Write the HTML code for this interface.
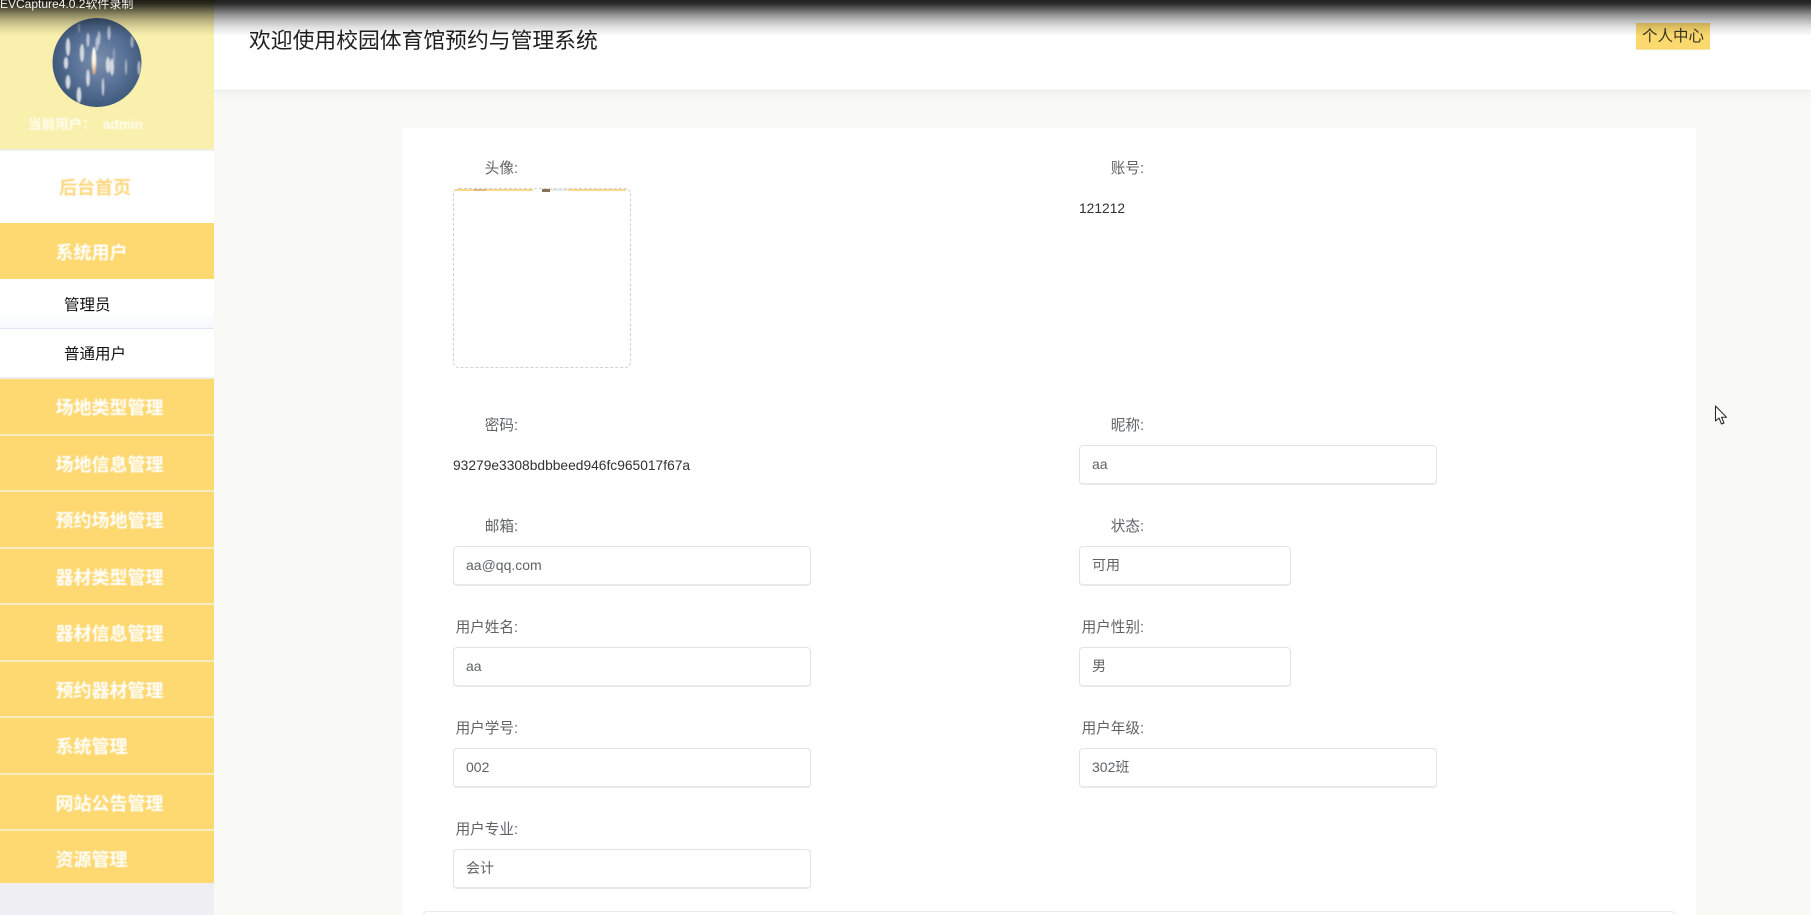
<!DOCTYPE html>
<html lang="zh-CN">
<head>
<meta charset="utf-8">
<title>校园体育馆预约与管理系统</title>
<style>
html,body{margin:0;padding:0;width:1811px;height:915px;overflow:hidden;background:#f9faf5;}
body{position:relative;font-family:"Liberation Sans","Noto Sans CJK SC",sans-serif;color:#606266;}
div,span{box-sizing:border-box;}
.a{position:absolute;}
.t{position:absolute;white-space:nowrap;line-height:20px;height:20px;filter:blur(.3px);}
.lab{font-size:14.6px;color:#606266;text-align:right;width:90px;}
.val{font-size:13.8px;color:#303133;}
.inp{position:absolute;height:40px;background:#fff;border:1px solid #e1e3e8;border-bottom:2px solid #e8e9ec;border-radius:4px;font-size:14px;color:#606266;line-height:37.5px;padding-left:12px;white-space:nowrap;}
.menu{position:absolute;left:0;width:213.5px;height:56.5px;background:#fed870;border-bottom:2px solid #f7ebbf;color:#fff;font-size:18px;font-weight:700;line-height:59px;padding-left:55.5px;white-space:nowrap;}
.menu span{filter:blur(.45px);display:inline-block;line-height:20px;}
</style>
</head>
<body>

<!-- Sidebar -->
<div class="a" style="left:0;top:0;width:213.5px;height:915px;background:#eeeef3;"></div>
<div class="a" style="left:0;top:0;width:213.5px;height:149px;background:#faf0ae;"></div>
<div class="a" style="left:0;top:149px;width:213.5px;height:2px;background:#f0f0ee;"></div>

<svg class="a" style="left:0;top:0;" width="214" height="150" viewBox="0 0 214 150">
  <defs>
    <radialGradient id="av" cx="52%" cy="48%" r="55%">
      <stop offset="0" stop-color="#7a8fae"/>
      <stop offset=".55" stop-color="#587196"/>
      <stop offset="1" stop-color="#3c5678"/>
    </radialGradient>
    <clipPath id="avc"><circle cx="97" cy="62.5" r="44.5"/></clipPath>
    <linearGradient id="fl" x1="0" y1="0" x2="0" y2="1">
      <stop offset="0" stop-color="#ffffff"/>
      <stop offset=".55" stop-color="#fff2dc"/>
      <stop offset="1" stop-color="#d99a6c"/>
    </linearGradient>
    <filter id="bl" x="-100%" y="-50%" width="300%" height="200%"><feGaussianBlur stdDeviation=".7"/></filter>
  </defs>
  <circle cx="97" cy="62.5" r="44.5" fill="url(#av)"/>
  <g clip-path="url(#avc)">
    <g fill="#d3d8e0" filter="url(#bl)">
      <ellipse cx="68" cy="47" rx="2.2" ry="9"/>
      <ellipse cx="82" cy="53" rx="2.2" ry="9"/>
      <ellipse cx="88" cy="40" rx="1.6" ry="7" opacity=".8"/>
      <ellipse cx="99" cy="38" rx="1.6" ry="7" opacity=".7"/>
      <ellipse cx="109" cy="33" rx="1.7" ry="7" opacity=".75"/>
      <ellipse cx="97" cy="44" rx="1.6" ry="7" opacity=".7"/>
      <ellipse cx="108" cy="65" rx="2.3" ry="8"/>
      <ellipse cx="112" cy="67" rx="2.1" ry="8.5"/>
      <ellipse cx="66" cy="63" rx="2.2" ry="6"/>
      <ellipse cx="68" cy="82" rx="2.4" ry="7"/>
      <ellipse cx="88" cy="78" rx="1.9" ry="8.5"/>
      <ellipse cx="79" cy="95" rx="2.4" ry="8"/>
      <ellipse cx="103" cy="87" rx="1.3" ry="9" opacity=".9"/>
      <ellipse cx="126" cy="67" rx="1.2" ry="8" opacity=".6"/>
      <ellipse cx="139" cy="68" rx="1.6" ry="7" opacity=".7"/>
      <ellipse cx="132" cy="42" rx="1.6" ry="6" opacity=".6"/>
      <ellipse cx="114" cy="55" rx="1" ry="7" opacity=".45"/>
      <ellipse cx="79" cy="28" rx="1.2" ry="5" opacity=".4"/>
    </g>
    <ellipse cx="94" cy="61" rx="2.3" ry="14" fill="url(#fl)" filter="url(#bl)"/>
  </g>
</svg>

<div class="t" style="left:28px;top:115px;font-size:13.5px;font-weight:700;color:#fffdf0;filter:blur(.4px);">当前用户：&nbsp;&nbsp;admin</div>

<div class="a" style="left:0;top:151px;width:213.5px;height:72px;background:#fff;"></div>
<div class="t" style="left:59px;top:178px;font-size:18px;font-weight:700;color:#fdd77e;filter:blur(.45px);">后台首页</div>

<div class="a" style="left:0;top:223px;width:213.5px;height:56px;background:#fed870;"></div>
<div class="t" style="left:55.5px;top:243px;font-size:18px;font-weight:700;color:#fff;filter:blur(.45px);">系统用户</div>

<div class="a" style="left:0;top:279px;width:213.5px;height:50px;background:linear-gradient(#fff 70%,#f6f8fb);border-bottom:1px solid #e2e8f1;"></div>
<div class="t" style="left:64px;top:295.5px;font-size:15.5px;color:#111;">管理员</div>
<div class="a" style="left:0;top:329px;width:213.5px;height:50px;background:#fff;border-bottom:2px solid #eee;"></div>
<div class="t" style="left:64px;top:345px;font-size:15.5px;color:#111;">普通用户</div>

<div class="menu" style="top:379px;"><span>场地类型管理</span></div>
<div class="menu" style="top:435.5px;"><span>场地信息管理</span></div>
<div class="menu" style="top:492px;"><span>预约场地管理</span></div>
<div class="menu" style="top:548.5px;"><span>器材类型管理</span></div>
<div class="menu" style="top:605px;"><span>器材信息管理</span></div>
<div class="menu" style="top:661.5px;"><span>预约器材管理</span></div>
<div class="menu" style="top:718px;"><span>系统管理</span></div>
<div class="menu" style="top:774.5px;"><span>网站公告管理</span></div>
<div class="menu" style="top:831px;height:52px;border-bottom:0;"><span>资源管理</span></div>

<!-- Header -->
<div class="a" style="left:213.5px;top:0;width:1598px;height:91px;background:#fff;border-bottom:1px solid #e9ebe8;"></div>
<div class="a" style="left:213.5px;top:91px;width:1598px;height:12px;background:linear-gradient(#f3f4f1,#f9faf5);"></div>
<div class="t" style="left:249px;top:27px;height:28px;line-height:28px;font-size:21.8px;color:#1f1f1f;">欢迎使用校园体育馆预约与管理系统</div>
<div class="a" style="left:1636px;top:23px;width:74px;height:27px;background:#fbd96f;border-bottom:1px solid #f3e3a8;color:#3a3520;font-size:15.5px;line-height:28px;text-align:center;white-space:nowrap;">个人中心</div>

<!-- Panel -->
<div class="a" style="left:403px;top:128px;width:1293px;height:787px;background:#fff;"></div>

<!-- faint watermark -->
<div class="a" style="left:1346px;top:857px;width:315px;height:14px;background:#fefefe;"></div>

<!-- Row 1 -->
<div class="t lab" style="left:428px;top:159px;">头像:</div>
<div class="a" style="left:453px;top:188px;width:178px;height:180px;background:#fff;border:1.5px dashed #cfd1d3;border-radius:6px;"></div>
<div class="a" style="left:455px;top:189px;width:78px;height:2px;background:#f8d889;"></div>
<div class="a" style="left:474px;top:189px;width:12px;height:2px;background:#e9b47e;"></div>
<div class="a" style="left:542px;top:189px;width:8px;height:3px;background:#8a6f5a;"></div>
<div class="a" style="left:550px;top:189px;width:18px;height:2px;background:#e4e9e8;"></div>
<div class="a" style="left:568px;top:189px;width:58px;height:2px;background:#f8d889;"></div>

<div class="t lab" style="left:1054px;top:159px;">账号:</div>
<div class="t val" style="left:1079px;top:199px;">121212</div>

<!-- Row 2 -->
<div class="t lab" style="left:428px;top:416px;">密码:</div>
<div class="t val" style="left:453px;top:456px;">93279e3308bdbbeed946fc965017f67a</div>
<div class="t lab" style="left:1054px;top:416px;">昵称:</div>
<div class="inp" style="left:1079px;top:445px;width:358px;">aa</div>

<!-- Row 3 -->
<div class="t lab" style="left:428px;top:517px;">邮箱:</div>
<div class="inp" style="left:453px;top:546px;width:358px;">aa@qq.com</div>
<div class="t lab" style="left:1054px;top:517px;">状态:</div>
<div class="inp" style="left:1079px;top:546px;width:212px;">可用</div>

<!-- Row 4 -->
<div class="t lab" style="left:428px;top:618px;">用户姓名:</div>
<div class="inp" style="left:453px;top:647px;width:358px;">aa</div>
<div class="t lab" style="left:1054px;top:618px;">用户性别:</div>
<div class="inp" style="left:1079px;top:647px;width:212px;">男</div>

<!-- Row 5 -->
<div class="t lab" style="left:428px;top:719px;">用户学号:</div>
<div class="inp" style="left:453px;top:748px;width:358px;">002</div>
<div class="t lab" style="left:1054px;top:719px;">用户年级:</div>
<div class="inp" style="left:1079px;top:748px;width:358px;">302班</div>

<!-- Row 6 -->
<div class="t lab" style="left:428px;top:820px;">用户专业:</div>
<div class="inp" style="left:453px;top:849px;width:358px;">会计</div>

<!-- Bottom box -->
<div class="a" style="left:423px;top:911px;width:1252px;height:20px;background:#fff;border:1px solid #e9eaeb;border-radius:4px;"></div>

<!-- Cursor -->
<svg class="a" style="left:1714px;top:405px;" width="16" height="21" viewBox="0 0 16 21">
  <path d="M1.5 1 L1.5 16 L5 13 L7.5 19 L10 18 L7.5 12.2 L12.5 12.2 Z" fill="#fff" stroke="#222" stroke-width="1" stroke-linejoin="round"/>
</svg>

<!-- Top recording overlay -->
<div class="a" style="left:0;top:0;width:1811px;height:37px;background:linear-gradient(rgba(0,0,0,.88) 0,rgba(0,0,0,.82) 4px,rgba(0,0,0,.6) 10px,rgba(0,0,0,.42) 15px,rgba(0,0,0,.28) 20px,rgba(0,0,0,.12) 27px,rgba(0,0,0,0) 36px);"></div>
<div class="t" style="left:0;top:-6px;font-size:12px;color:#f4f4f0;">EVCapture4.0.2软件录制</div>

</body>
</html>
